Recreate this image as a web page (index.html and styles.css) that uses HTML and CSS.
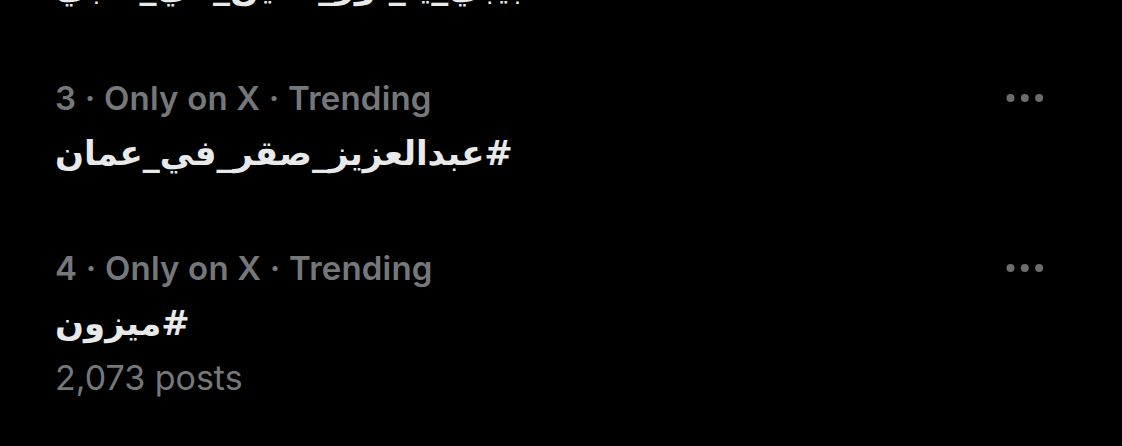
FILE: index.html
```html
<!DOCTYPE html>
<html lang="en">
<head>
  <meta charset="UTF-8">
  <meta name="viewport" content="width=device-width, initial-scale=1">
  <title>Trends</title>
  <link rel="stylesheet" href="styles.css">
</head>
<body>
<div class="feed">

  <div class="trend trend-cut">
    <div class="trend-body">
      <div class="meta">2 · Only on X · Trending</div>
      <div class="tag"><span dir="rtl">#حبيبي_يا_نور_العين_في_قلبي</span></div>
    </div>
    <svg class="more" width="38" height="10" viewBox="0 0 38 10"><circle cx="4.5" cy="5" r="4"/><circle cx="18.8" cy="5" r="4"/><circle cx="33.1" cy="5" r="4"/></svg>
  </div>

  <div class="trend">
    <div class="trend-body">
      <div class="meta">3 · Only on X · Trending</div>
      <div class="tag"><span dir="rtl">#عبدالعزيز_صقر_في_عمان</span></div>
    </div>
    <svg class="more" width="38" height="10" viewBox="0 0 38 10"><circle cx="4.5" cy="5" r="4"/><circle cx="18.8" cy="5" r="4"/><circle cx="33.1" cy="5" r="4"/></svg>
  </div>

  <div class="trend">
    <div class="trend-body">
      <div class="meta">4 · Only on X · Trending</div>
      <div class="tag"><span dir="rtl">#ميزون</span></div>
      <div class="posts">2,073 posts</div>
    </div>
    <svg class="more" width="38" height="10" viewBox="0 0 38 10"><circle cx="4.5" cy="5" r="4"/><circle cx="18.8" cy="5" r="4"/><circle cx="33.1" cy="5" r="4"/></svg>
  </div>

</div>
</body>
</html>
```

FILE: styles.css
```css
body { margin: 0; background: #000; font-family: Inter, "Liberation Sans", sans-serif; overflow: hidden; }
.feed { margin-top: -127px; }
.trend { display: flex; justify-content: space-between; align-items: flex-start; padding: 35px 78px 35px 55px; }
.trend-cut { padding-top: 38px; padding-bottom: 32px; }
.trend-body { display: flex; flex-direction: column; }
.meta { font-size: 33px; line-height: 40px; font-weight: 600; letter-spacing: 0.2px; color: #75787b; }
.tag { margin-top: 10px; font-family: "DejaVu Sans", sans-serif; font-size: 34px; line-height: 50px; font-weight: bold; color: #e7e9ea; }
.posts { margin-top: 10px; font-size: 34px; line-height: 40px; color: #75787b; }
.more { margin-top: 15px; fill: #6a6c6e; }
```
